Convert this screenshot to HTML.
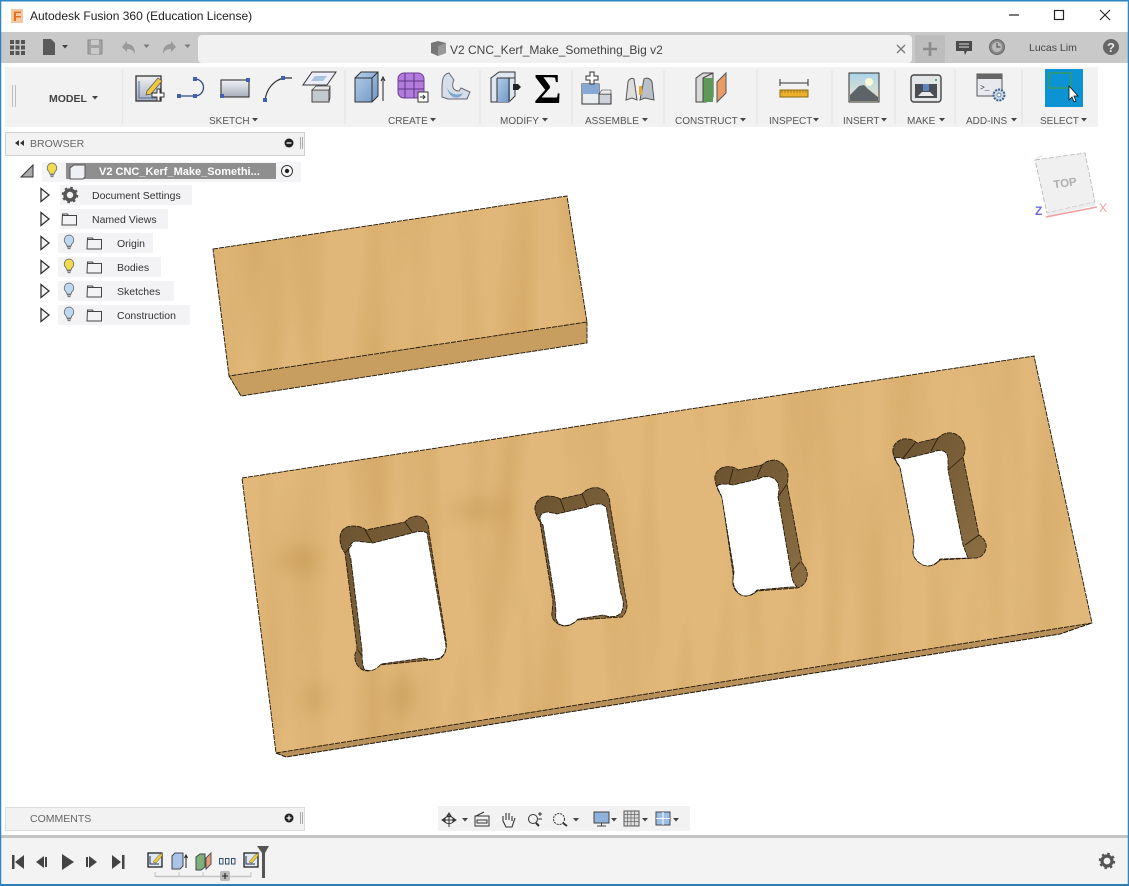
<!DOCTYPE html>
<html><head><meta charset="utf-8"><title>Autodesk Fusion 360</title>
<style>
html,body{margin:0;padding:0;width:1129px;height:886px;overflow:hidden;background:#fff}
svg{display:block}
text{font-family:"Liberation Sans",sans-serif}
</style></head><body>
<svg width="1129" height="886" viewBox="0 0 1129 886" xmlns="http://www.w3.org/2000/svg">
<defs>
<linearGradient id="blue" x1="0" y1="0" x2="1" y2="1"><stop offset="0" stop-color="#b4cde8"/><stop offset="1" stop-color="#6f97c6"/></linearGradient>
<linearGradient id="gray" x1="0" y1="0" x2="0" y2="1"><stop offset="0" stop-color="#f0f1f4"/><stop offset="1" stop-color="#a9afbd"/></linearGradient>
<linearGradient id="wall" x1="0" y1="0" x2="1" y2="1"><stop offset="0" stop-color="#6b5330"/><stop offset="1" stop-color="#8c6f44"/></linearGradient>
<linearGradient id="sky" x1="0" y1="0" x2="0" y2="1"><stop offset="0" stop-color="#a9d3ea"/><stop offset="1" stop-color="#f0e6c8"/></linearGradient>
<filter id="wood" x="0" y="0" width="100%" height="100%" color-interpolation-filters="sRGB">
<feTurbulence type="fractalNoise" baseFrequency="0.028 0.003" numOctaves="2" seed="7"/>
<feGaussianBlur stdDeviation="3 6"/>
<feColorMatrix values="0 0 0 0 0.76  0 0 0 0 0.57  0 0 0 0 0.29  0.9 0 0 0 -0.39"/>
<feComposite in2="SourceAlpha" operator="in" result="g"/>
<feMerge><feMergeNode in="SourceGraphic"/><feMergeNode in="g"/></feMerge>
</filter>
<filter id="bl" x="-50%" y="-50%" width="200%" height="200%"><feGaussianBlur stdDeviation="9"/></filter>
<g id="bulb"><path d="M0-7a5 5 0 0 1 3.2 8.6c-.8.8-1 1.6-1 2.4h-4.4c0-.8-.2-1.6-1-2.4A5 5 0 0 1 0-7z" stroke="#666" stroke-width=".8"/><path d="M-2 5h4M-1.5 6.6h3" stroke="#666" stroke-width="1"/></g>
<g id="folder"><path d="M.5 2.5h5l1 1.5h8v9.500h-14.500z" fill="#f3f3f6" stroke="#444" stroke-width="1"/><path d="M.5 4h6" stroke="#444" fill="none"/></g>
<path id="arr" d="M0-6.500l8 6.500-8 6.500z" fill="#f4f4f4" stroke="#333" stroke-width="1.300"/>
<path id="dd" d="M-3 0h6l-3 3.500z" fill="#444"/>
<g id="sk"><rect x="-7" y="-7" width="14" height="14" fill="#dfe7f2" stroke="#111" stroke-width="1.200"/><path d="M-5-4v8h9" stroke="#234" fill="none"/><path d="M-2 2l6-7 3-2 0 3-6 7z" fill="#f3cc2f" stroke="#555" stroke-width=".5"/></g>
</defs>

<rect width="1129" height="886" fill="#fff"/>

<!-- title bar -->
<rect x="11" y="9" width="12" height="14" fill="#f3c9a0"/>
<text x="13" y="21" font-size="14" font-weight="bold" fill="#e36f1e">F</text>
<text x="30" y="20" font-size="12" fill="#1c1c1c">Autodesk Fusion 360 (Education License)</text>
<path d="M1009 15h10" stroke="#222" stroke-width="1.200"/>
<rect x="1054.500" y="10.500" width="9" height="9" fill="none" stroke="#222" stroke-width="1.200"/>
<path d="M1100 10l10 10M1110 10l-10 10" stroke="#222" stroke-width="1.100"/>

<!-- top band -->
<rect x="1" y="32" width="1127" height="31" fill="#c9c9c9"/>
<rect x="198" y="35" width="714" height="28" rx="4" fill="#f1f1f1"/>
<rect x="915" y="35" width="30" height="28" fill="#bdbdbd"/>
<path d="M930 42v14M923 49h14" stroke="#8b8b8b" stroke-width="2.600"/>
<g fill="#555"><rect x="10" y="40" width="4" height="4"/><rect x="15.500" y="40" width="4" height="4"/><rect x="21" y="40" width="4" height="4"/><rect x="10" y="45.500" width="4" height="4"/><rect x="15.500" y="45.500" width="4" height="4"/><rect x="21" y="45.500" width="4" height="4"/><rect x="10" y="51" width="4" height="4"/><rect x="15.500" y="51" width="4" height="4"/><rect x="21" y="51" width="4" height="4"/></g>
<path d="M43 39h8l4 4v12h-12z" fill="#5a5a5a"/><use href="#dd" x="65" y="45"/>
<rect x="88" y="40" width="14" height="14" fill="#a3a3a3" stroke="#8a8a8a"/><rect x="91" y="40" width="8" height="5" fill="#c9c9c9"/><rect x="91" y="48" width="8" height="6" fill="#c9c9c9"/>
<path d="M122 47l5-6v3c5 0 8 3 8 10-2-4-4-5-8-5v3z" fill="#9a9a9a"/><use href="#dd" x="146.500" y="44.500" opacity=".6"/>
<path d="M176 47l-5-6v3c-5 0-8 3-8 10 2-4 4-5 8-5v3z" fill="#9a9a9a"/><use href="#dd" x="187.500" y="44.500" opacity=".6"/>
<path d="M431 43l7-2 8 2v10l-8 3-7-3z" fill="#777"/><path d="M438 46l8-3v10l-8 3z" fill="#999"/>
<text x="450" y="54" font-size="12" fill="#444">V2 CNC_Kerf_Make_Something_Big v2</text>
<path d="M897 45l8 8M905 45l-8 8" stroke="#777" stroke-width="1.300"/>
<path d="M956 41h16v10h-5l-2 4-1-4h-8z" fill="#4a4a4a"/><path d="M959 44h10M959 47h10" stroke="#ddd"/>
<circle cx="997" cy="47" r="7.500" fill="#888" stroke="#666"/><circle cx="997" cy="47" r="5" fill="#bbb"/><path d="M997 43v4h3.500" stroke="#444" fill="none"/>
<text x="1029" y="51" font-size="10.500" fill="#444">Lucas Lim</text>
<circle cx="1111" cy="47" r="8" fill="#666"/><text x="1107" y="52" font-size="13" font-weight="bold" fill="#e8e8e8">?</text>

<!-- ribbon -->
<rect x="5" y="67" width="1093" height="60" fill="#f2f2f2"/>
<g stroke="#e6e6e6" stroke-width="1.500">
<path d="M122.500 70v54M345 70v54M480 70v54M572 70v54M664 70v54M757 70v54M832 70v54M895 70v54M955 70v54M1022 70v54"/></g>
<path d="M12.500 85v22M15.500 85v22" stroke="#bdbdbd"/>
<text x="49" y="102" font-size="10.500" font-weight="bold" fill="#444">MODEL</text><use href="#dd" x="95" y="96"/>
<g font-size="10" fill="#555">
<text x="209" y="124">SKETCH</text><use href="#dd" x="255" y="118"/>
<text x="388" y="124">CREATE</text><use href="#dd" x="433" y="118"/>
<text x="500" y="124">MODIFY</text><use href="#dd" x="545" y="118"/>
<text x="585" y="124">ASSEMBLE</text><use href="#dd" x="645" y="118"/>
<text x="675" y="124">CONSTRUCT</text><use href="#dd" x="743" y="118"/>
<text x="769" y="124">INSPECT</text><use href="#dd" x="816" y="118"/>
<text x="843" y="124">INSERT</text><use href="#dd" x="884" y="118"/>
<text x="907" y="124">MAKE</text><use href="#dd" x="942" y="118"/>
<text x="966" y="124">ADD-INS</text><use href="#dd" x="1014" y="118"/>
<text x="1040" y="124">SELECT</text><use href="#dd" x="1084" y="118"/>
</g>
<!-- sketch icons -->
<rect x="136" y="76" width="25" height="25" fill="url(#gray)" stroke="#333" stroke-width="1.300"/>
<path d="M139 81v17h17" stroke="#4a6ea8" fill="none"/>
<path d="M147 91l11-13 4 3-11 13-5 1z" fill="#f0c93a" stroke="#555" stroke-width=".7"/>
<path d="M152 93h5v-4h3v4h4v4h-4v4h-3v-4h-5z" fill="#fff" stroke="#333"/>
<path d="M179 96h16M195 79a8.500 8.500 0 0 1 0 17" fill="none" stroke="#334c80" stroke-width="1.300"/>
<g fill="#3d62b5"><rect x="177" y="94" width="4" height="4"/><rect x="193" y="94" width="4" height="4"/><rect x="193" y="77" width="4" height="4"/></g>
<rect x="221" y="80" width="28" height="17" fill="url(#gray)" stroke="#333" stroke-width="1.100"/>
<g fill="#3d62b5"><rect x="220" y="94" width="4" height="4"/><rect x="246" y="78" width="4" height="4"/></g>
<path d="M265 101c1-12 9-21 19-23h8" fill="none" stroke="#333" stroke-width="1.200"/>
<g fill="#3d62b5"><rect x="263" y="98" width="4" height="4"/><rect x="281" y="76" width="4" height="4"/></g>
<path d="M312 72h24l-9 13h-24z" fill="#eef" stroke="#333"/><path d="M315 76h12l-4 5h-12z" fill="#a8c4e0"/>
<path d="M312 90h17v12h-17z" fill="#c4c9d0" stroke="#444"/><path d="M312 90l4-4h14l-1 4zM329 90l1-4v12l-1 4z" fill="#e8e8e8" stroke="#444" stroke-width=".8"/>
<!-- create -->
<path d="M355 78l6-6h17v24l-6 6h-17z" fill="url(#blue)" stroke="#333"/><path d="M355 78h17v24M372 78l6-6" fill="none" stroke="#333"/>
<path d="M383 101v-22M381 81l2-4 2 4" stroke="#222" fill="none"/>
<rect x="398" y="73" width="26" height="25" rx="6" fill="#b27bdc" stroke="#6d3d9a"/><path d="M398 81h26M398 89h26M405 73v25M414 73v25" stroke="#5f3585"/>
<rect x="418" y="92" width="10" height="10" fill="#fff" stroke="#333"/><path d="M420 97h5M423 95l2 2-2 2" stroke="#333" fill="none"/>
<path d="M442 88c0-8 1-14 7-15l5 7c-3 6-1 11 5 11l2-3 9 4-3 7h-19l-6-2z" fill="#d6dee8" stroke="#667"/><path d="M447 87c2 7 10 9 16 6-3 7-14 7-16-6z" fill="#7fa7cf"/>
<!-- modify -->
<path d="M491 78l8-6h16v24l-6 6h-18z" fill="#dfe6ef" stroke="#333"/><rect x="497" y="78" width="13" height="24" fill="url(#blue)"/><path d="M497 78h18v-6M497 78v24M509 78v24" stroke="#333" fill="none"/>
<path d="M513 84h5l3 3-3 3h-5z" fill="#222"/>
<text x="534" y="103" font-size="42" font-weight="bold" fill="#000" style="font-family:'Liberation Serif',serif">Σ</text>
<!-- assemble -->
<path d="M582 84h17v20h-17z" fill="#e9ecef" stroke="#333"/><path d="M582 84h17v10h-17z" fill="#86a9d4"/><path d="M599 94h12v10h-12z" fill="#cfd3d8" stroke="#333"/><path d="M599 94l3-4h9v4z" fill="#ececec" stroke="#333" stroke-width=".6"/>
<path d="M586 76h4v-4h4v4h4v4h-4v4h-4v-4h-4z" fill="#fff" stroke="#333"/>
<path d="M626 100l2-18c1-4 5-4 6-3l3 21-5-2-6 2z" fill="#ddd" stroke="#555"/><path d="M654 100l-2-18c-1-3-5-5-8-3l-4 21 5-2z" fill="#b9c0c8" stroke="#555"/><rect x="639" y="86" width="3" height="9" fill="#e8a53a"/>
<!-- construct -->
<path d="M696 78l7-5h10v24l-7 5h-10z" fill="#d9d9d9" stroke="#444"/><rect x="703" y="78" width="10" height="24" fill="#5d9a57"/><path d="M703 78v24M703 78l10-5" stroke="#444" fill="none"/>
<path d="M717 102v-20l9-9v20z" fill="#ea9c66" stroke="#555"/>
<!-- inspect -->
<path d="M780 79v7M808 79v7M780 83h28" stroke="#333"/><rect x="780" y="90" width="28" height="7" fill="#ecb22e" stroke="#8a6a10"/><path d="M782 90v3M785 90v3M788 90v3M791 90v3M794 90v3M797 90v3M800 90v3M803 90v3M806 90v3" stroke="#8a6a10" stroke-width=".7"/>
<!-- insert -->
<rect x="849" y="73" width="30" height="29" fill="url(#sky)" stroke="#333"/><circle cx="869" cy="82" r="4" fill="#fff9d6"/><path d="M850 101v-6l9-9 5-1 4 4 10 8v4z" fill="#5d6468"/>
<!-- make -->
<rect x="911" y="75" width="30" height="27" rx="3" fill="#e4e5e7" stroke="#444" stroke-width="1.400"/><rect x="915" y="84" width="22" height="14" fill="#4a4d52"/><rect x="923" y="84" width="6" height="7" fill="#5b86bf"/><path d="M918 96l4-4h8l4 4z" fill="#e9e9e9"/><circle cx="936" cy="80" r="1" fill="#3a9a55"/>
<!-- add-ins -->
<rect x="977" y="74" width="25" height="22" fill="#e7e9ee" stroke="#555"/><rect x="977" y="74" width="25" height="5" fill="#666"/><text x="980" y="90" font-size="8" fill="#333" style="font-family:'Liberation Mono',monospace">&gt;_</text>
<circle cx="999" cy="95" r="5.500" fill="#cdd9e8" stroke="#3e5f8a" stroke-width="2" stroke-dasharray="2 1.100"/><circle cx="999" cy="95" r="2" fill="#fff" stroke="#3e5f8a" stroke-width=".7"/>
<!-- select -->
<rect x="1045" y="69" width="38" height="38" fill="#0b93d3"/>
<rect x="1049" y="73" width="22" height="15" fill="none" stroke="#3e9a55" stroke-width="1.300"/>
<path d="M1069 86v14l3-3 2 5 2-1-2-5h4z" fill="#fff" stroke="#111" stroke-width=".8"/>

<!-- browser -->
<rect x="5.500" y="132.500" width="299" height="23" fill="#f2f2f2" stroke="#cfcfcf"/>
<path d="M15 143l4-3v6zM20 143l4-3v6z" fill="#333"/>
<text x="30" y="147" font-size="10.500" fill="#666">BROWSER</text>
<circle cx="289" cy="143" r="4.500" fill="#222"/><path d="M286.500 143h5" stroke="#fff" stroke-width="1.300"/>
<path d="M300.500 137v12M302.500 137v12" stroke="#aaa"/>

<rect x="42" y="162" width="259" height="20" fill="#f4f4f6"/>
<path d="M21 177h12v-12z" fill="#aaa" stroke="#333"/>
<use href="#bulb" x="52" y="170" fill="#f2da4f"/>
<rect x="66" y="163" width="210" height="16" fill="#8f8f8f"/>
<path d="M70 168l4-3h11v12l-2 2h-13z" fill="#eef0f3" stroke="#555"/>
<text x="99" y="175" font-size="11" font-weight="bold" fill="#fff">V2 CNC_Kerf_Make_Somethi...</text>
<circle cx="287" cy="171" r="5.500" fill="#fff" stroke="#333"/><circle cx="287" cy="171" r="2.200" fill="#222"/>

<rect x="60" y="185" width="132" height="20" fill="#f3f3f5"/>
<rect x="60" y="209" width="108" height="20" fill="#f3f3f5"/>
<rect x="58" y="233" width="95" height="20" fill="#f3f3f5"/>
<rect x="58" y="257" width="103" height="20" fill="#f3f3f5"/>
<rect x="58" y="281" width="116" height="20" fill="#f3f3f5"/>
<rect x="58" y="305" width="132" height="20" fill="#f3f3f5"/>
<use href="#arr" x="41" y="195"/><use href="#arr" x="41" y="219"/><use href="#arr" x="41" y="243"/><use href="#arr" x="41" y="267"/><use href="#arr" x="41" y="291"/><use href="#arr" x="41" y="315"/>
<circle cx="70" cy="195" r="5" fill="none" stroke="#555" stroke-width="3.500"/><circle cx="70" cy="195" r="7" fill="none" stroke="#555" stroke-width="2.500" stroke-dasharray="2.500 3"/>
<use href="#folder" x="62" y="211.500"/>
<use href="#bulb" x="69" y="242" fill="#bcd8f2"/><use href="#folder" x="87" y="235.500"/>
<use href="#bulb" x="69" y="266" fill="#f2da4f"/><use href="#folder" x="87" y="259.500"/>
<use href="#bulb" x="69" y="290" fill="#bcd8f2"/><use href="#folder" x="87" y="283.500"/>
<use href="#bulb" x="69" y="314" fill="#bcd8f2"/><use href="#folder" x="87" y="307.500"/>
<g font-size="10.500" fill="#333">
<text x="92" y="199">Document Settings</text>
<text x="92" y="223">Named Views</text>
<text x="117" y="247">Origin</text>
<text x="117" y="271">Bodies</text>
<text x="117" y="295">Sketches</text>
<text x="117" y="319">Construction</text>
</g>

<!-- small board -->
<polygon points="229,376 587,322 587,343 241,396" fill="#c89e60"/>
<polygon points="213,249 567,196 587,322 229,376" fill="#e0b778" filter="url(#wood)"/>
<g fill="none" stroke="#1e1508" stroke-width=".9" stroke-dasharray="5 1">
<path d="M213 249L567 196L587 322L229 376Z"/><path d="M229 376L241 396L587 343V322"/></g>

<!-- large board -->
<polygon points="276,753 1092,623 1060,634 286,757" fill="#b8915a"/>
<polygon points="242,478 1034,356 1092,623 276,753" fill="#e1b87a" filter="url(#wood)"/>
<g fill="#b08238" opacity=".28" filter="url(#bl)"><ellipse cx="402" cy="695" rx="14" ry="20"/><ellipse cx="315" cy="698" rx="12" ry="16"/><ellipse cx="300" cy="560" rx="22" ry="14"/><ellipse cx="480" cy="510" rx="30" ry="10"/></g>
<g fill="none" stroke="#1e1508" stroke-width=".9" stroke-dasharray="5 1">
<path d="M242 478L1034 356L1092 623L276 753Z"/><path d="M276 753L286 757L1060 634L1092 623" stroke-width="1"/></g>

<!-- holes -->
<g stroke="#1b1206" stroke-width=".8" stroke-dasharray="5 1" stroke-linejoin="round">
<path d="M340 538C340 530 346 526 352 526C358 526 363 527 366 530L405 522C409 517 414 516 418 516C424 517 429 522 429 532L446 640C447 648 446 654 440 659L380 665C374 671 368 672 363 670C357 667 354 661 355 654C356 652 357 650 357 648L345 553C341 548 340 543 340 538Z" fill="url(#wall)"/>
<path d="M349 552C348 547 351 543 355 541L373 543L412 533C418 531 424 531 427 533L445 640C447 648 446 654 440 658C434 660 428 660 424 658L381 664C376 671 368 672 364 669C362 663 362 655 362 650L351 560C351 557 349 555 349 552Z" fill="#fff"/>
</g>
<path d="M365 530L372 542M405 522L412 532M345 553L352 545M358 650L362 656" stroke="#2a1c0a" stroke-width=".8" fill="none"/>

<g stroke="#1b1206" stroke-width=".8" stroke-dasharray="5 1" stroke-linejoin="round">
<path d="M535 510C534 502 541 496 548 496C553 496 557 497 560 499L582 494C587 488 594 487 599 488C606 490 610 496 610 505L626 600C628 606 627 612 622 617L577 620C572 626 565 627 560 625C554 622 551 618 552 612L553 602L540 522C537 518 536 514 535 510Z" fill="url(#wall)"/>
<path d="M540 518C540 514 544 512 548 512L557 514L587 507C593 504 600 503 603 505C606 506 607 509 607 512L621 594C624 600 624 608 621 613C616 618 608 617 603 615L578 619C572 626 564 627 559 624C556 621 555 616 556 612L555 600L543 525C541 523 540 521 540 518Z" fill="#fff"/>
</g>
<path d="M560 499L565 512M582 494L587 506" stroke="#2a1c0a" stroke-width=".8" fill="none"/>

<g stroke="#1b1206" stroke-width=".8" stroke-dasharray="5 1" stroke-linejoin="round">
<path d="M715 480C714 473 718 469 724 467C730 466 735 467 738 470L762 465C766 461 771 460 775 460C781 461 787 467 788 474C788 478 788 481 787 484L802 563C806 567 808 573 807 577C806 583 802 587 797 588L757 591C752 596 746 597 741 595C735 592 732 586 733 580L733 573L722 497C718 491 716 486 715 480Z" fill="url(#wall)"/>
<path d="M717 486C719 484 723 484 727 484L733 485L758 479C763 476 770 476 773 478C777 480 779 484 779 490L778 497L792 578C793 582 795 585 797 587L790 587L757 590C752 596 746 597 741 595C736 592 733 586 733 580L734 572L722 498C721 494 718 490 717 486Z" fill="#fff"/>
</g>
<path d="M733 469L729 484M762 465L757 477M787 484L778 497M800 562L791 572" stroke="#2a1c0a" stroke-width=".8" fill="none"/>

<g stroke="#1b1206" stroke-width=".8" stroke-dasharray="5 1" stroke-linejoin="round">
<path d="M893 453C892 446 896 441 903 439C909 438 914 440 917 443L938 438C942 434 947 432 952 433C959 434 965 441 965 449C965 452 964 455 963 457L979 535C984 538 987 543 986 548C985 554 981 558 975 558L940 560C935 566 928 567 923 565C917 562 913 557 913 552L914 540L900 467C896 463 894 458 893 453Z" fill="url(#wall)"/>
<path d="M895 458C898 457 901 458 904 459L933 452C938 450 943 450 945 452C948 454 948 458 948 462L948 470L963 545L968 558L940 559C935 566 928 567 923 565C917 562 913 557 913 552L914 540L900 467C898 464 896 461 895 458Z" fill="#fff"/>
</g>
<path d="M915 443L903 458M938 438L931 451M963 457L948 470M979 535L965 545" stroke="#2a1c0a" stroke-width=".8" fill="none"/>

<!-- viewcube -->
<polygon points="1035,160 1085,153 1095,202 1047,213" fill="#f0f0f0" stroke="#b5b5b5" stroke-width=".8" stroke-dasharray="5 2"/>
<path d="M1047 213L1095 202L1096 205L1048 216Z" fill="#ececec"/>
<path d="M1046 217L1097 207" stroke="#eea0a0" stroke-width="1.500"/>
<path d="M1035 160L1042 155" stroke="#cfe6cf"/>
<text x="1053" y="187" font-size="11.500" font-weight="bold" fill="#b0b0b0" transform="rotate(-8 1064 181)">TOP</text>
<text x="1099" y="212" font-size="12" fill="#eea0a0">X</text>
<text x="1035" y="215" font-size="12" font-weight="bold" fill="#6a6ae6">Z</text>

<!-- comments -->
<rect x="5.500" y="807.500" width="299" height="23" fill="#f2f2f2" stroke="#dcdcdc"/>
<text x="30" y="822" font-size="10.500" fill="#666">COMMENTS</text>
<circle cx="289" cy="818" r="4.500" fill="#222"/><path d="M286.500 818h5M289 815.500v5" stroke="#fff" stroke-width="1.200"/>
<path d="M300.500 812v12M302.500 812v12" stroke="#aaa"/>

<!-- nav bar -->
<rect x="438" y="806" width="252" height="25" fill="#f2f2f2"/>
<g fill="none" stroke="#333" stroke-width="1">
<path d="M449 813v14M442 820h14M449 813l-2 3h4zM442 820l3-2v4zM456 820l-3-2v4z"/><ellipse cx="449" cy="820" rx="5" ry="3.500"/>
<rect x="475" y="816" width="14" height="10"/><path d="M477 820h10v3h-10zM476 816l8-4"/>
<path d="M503 821v-5M506 820v-7M509 820v-7M512 821v-5M503 821l3 6h6l3-9" stroke-width="1.100"/>
<circle cx="533" cy="819" r="4.500"/><path d="M536 823l3 3" stroke-width="2"/><path d="M540 812v4M538 814h4M538 819h4"/>
<circle cx="559" cy="819" r="5.500" stroke-dasharray="2 1"/><path d="M563 823l4 3" stroke-width="2"/>
</g>
<use href="#dd" x="465" y="818"/><use href="#dd" x="576" y="818"/>
<rect x="594" y="812" width="15" height="11" fill="#8db3dc" stroke="#444"/><path d="M597 826h9M601.500 823v3" stroke="#444"/><use href="#dd" x="614" y="818"/>
<rect x="624" y="811" width="15" height="15" fill="#ddd" stroke="#555"/><path d="M627.500 811v15M631 811v15M634.500 811v15M624 814.500h15M624 818h15M624 821.500h15" stroke="#666" stroke-width=".7"/><use href="#dd" x="645" y="818"/>
<rect x="656" y="812" width="14" height="13" fill="#9dbfe2" stroke="#445"/><path d="M663 812v13M656 818.500h14" stroke="#fff"/><use href="#dd" x="676" y="818"/>

<!-- timeline -->
<rect x="1" y="835" width="1127" height="3" fill="#c4c4c4"/>
<rect x="1" y="838" width="1127" height="46" fill="#f3f3f3"/>
<g fill="#444">
<path d="M12 855h2.500v14h-2.500zM24 855v14l-9-7z"/>
<path d="M36 862l8-6v12zM45 857h2v10h-2z"/>
<path d="M62 854l12 8-12 8z"/>
<path d="M86 857h2v10h-2zM89 856l8 6-8 6z"/>
<path d="M112 855l9 7-9 7zM122 855h2.500v14h-2.500z"/>
</g>
<use href="#sk" x="155" y="860"/>
<path d="M172 856l3-3h8v13l-3 3h-8z" fill="#a9c4e6" stroke="#445"/><path d="M186 868v-12M184.500 858l1.500-3 1.500 3" stroke="#222" fill="none"/>
<path d="M196 857l4-3h5v13l-4 3h-5z" fill="#7fb07a" stroke="#445"/><path d="M206 869v-11l5-5v11z" fill="#ea9c7a" stroke="#555"/>
<rect x="219.500" y="858.500" width="3.500" height="5.500" fill="none" stroke="#334c70"/><rect x="225.500" y="858.500" width="3.500" height="5.500" fill="none" stroke="#334c70"/><rect x="231.500" y="858.500" width="3.500" height="5.500" fill="none" stroke="#334c70"/>
<use href="#sk" x="251" y="860"/>
<path d="M155 876.500h96" stroke="#c3c3c3" stroke-width="1.500"/>
<path d="M155 872v5M179 872v5M203 872v5M251 872v5" stroke="#c3c3c3"/>
<rect x="220" y="871" width="10" height="10" rx="2" fill="#bbb"/><path d="M222 876h6M225 873v6" stroke="#222" stroke-width="1.100"/>
<path d="M257 846h12l-4 7v25h-3v-25z" fill="#555"/>
<circle cx="1107" cy="861" r="5" fill="none" stroke="#555" stroke-width="3.200"/><circle cx="1107" cy="861" r="7" fill="none" stroke="#555" stroke-width="2.400" stroke-dasharray="2.500 3"/>

<!-- window border -->
<path d="M.5 0V885M1128.500 0V885" stroke="#2b87c4" stroke-width="1.500"/>
<path d="M0 .7H1129" stroke="#2b87c4" stroke-width="1.500"/>
<path d="M0 885H1129" stroke="#2b7fb5" stroke-width="2"/>
</svg>
</body></html>
